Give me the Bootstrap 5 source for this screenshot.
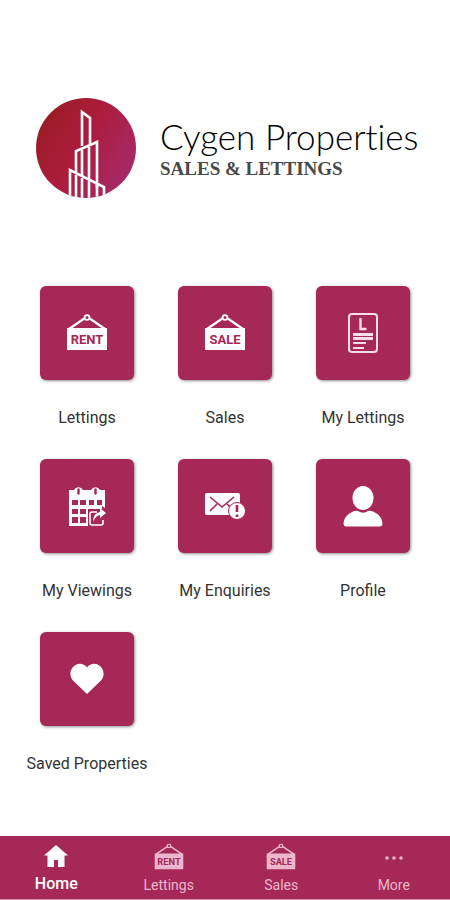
<!DOCTYPE html>
<html lang="en">
<head>
<meta charset="utf-8">
<meta name="viewport" content="width=device-width, initial-scale=1">
<title>Cygen Properties</title>
<link href="https://cdn.jsdelivr.net/npm/bootstrap@5.3.0/dist/css/bootstrap.min.css" rel="stylesheet">
<style>
  :root { --brand: #a62856; --brand-soft: #ecb6cc; }
  body { font-family: Roboto, "Liberation Sans", sans-serif; color: #333; background: #fff; }
  .brand-header { padding: 98px 32px 88px 36px; gap: 24px; }
  .brand-logo { width: 100px; height: 100px; }
  .brand-name { font: 300 35px/42px Lato, "Liberation Sans", sans-serif; font-variant-ligatures: none; color: #000; }
  .brand-tagline { font: 700 19px/24px "Liberation Serif", serif; color: #484848; }
  .menu-grid { padding: 0 18px; row-gap: 29px; }
  .menu-link { color: #333; gap: 26px; line-height: 24px; font-size: 16px; }
  .menu-tile { width: 94px; height: 94px; border-radius: 6px; background: var(--brand); color: #fff; box-shadow: 1px 1px 3px rgba(0, 0, 0, .45); }
  svg text { font-family: Roboto, "Liberation Sans", sans-serif; font-weight: 700; text-anchor: middle; }
  .tab-bar { background: var(--brand); border-bottom: 1px solid #d78ba8; }
  .tab-link { color: var(--brand-soft); height: 63px; padding-top: 6px; gap: 3px; font-size: 14px; line-height: 20px; }
  .tab-link svg { height: 30px; }
  .tab-link.active { color: #fff; font-size: 16px; font-weight: 500; gap: 2px; }
</style>
</head>
<body>
<svg class="d-none" aria-hidden="true">
  <symbol id="sign" viewBox="0 0 42 38">
    <path d="M3 15 19 4M39 15 23 4" fill="none" stroke="currentColor" stroke-width="2.200"/>
    <circle cx="21" cy="3.500" r="2.400" fill="none" stroke="currentColor" stroke-width="1.800"/>
    <path d="M1 14h40v22H1z" fill="currentColor"/>
  </symbol>
</svg>
<div class="d-flex flex-column min-vh-100">
  <header class="brand-header d-flex align-items-center">
    <svg class="brand-logo flex-shrink-0" viewBox="0 0 100 100" aria-hidden="true">
      <defs>
        <linearGradient id="logo-fill" x1="0" y1=".2" x2="1" y2=".8">
          <stop offset="0" stop-color="#981c24"/><stop offset=".45" stop-color="#ac1c3c"/><stop offset="1" stop-color="#a52c6c"/>
        </linearGradient>
        <clipPath id="logo-clip"><circle cx="50" cy="50" r="50"/></clipPath>
      </defs>
      <circle cx="50" cy="50" r="50" fill="url(#logo-fill)"/>
      <g clip-path="url(#logo-clip)" fill="none" stroke="#fff" stroke-width="2.600">
        <path d="M46 48V14l8 6v26M40 75V53l21-9v46M34 100V72l34 17v11"/>
        <path d="M46 52v26M53 49v32M40 77v24M46 80v21M53 83v18M61 86v15"/>
      </g>
    </svg>
    <div>
      <h1 class="brand-name mb-0 text-nowrap">Cygen Properties</h1>
      <p class="brand-tagline mb-0 text-nowrap">SALES &amp; LETTINGS</p>
    </div>
  </header>

  <main class="pb-5">
    <div class="menu-grid row row-cols-3 g-0">
      <div class="col">
        <a href="#lettings" class="menu-link d-flex flex-column align-items-center text-decoration-none text-nowrap">
          <span class="menu-tile d-flex align-items-center justify-content-center">
            <svg width="42" height="38" viewBox="0 0 42 38"><use href="#sign"/><text x="21" y="30" font-size="13" fill="#a62856">RENT</text></svg>
          </span>
          <span>Lettings</span>
        </a>
      </div>
      <div class="col">
        <a href="#sales" class="menu-link d-flex flex-column align-items-center text-decoration-none text-nowrap">
          <span class="menu-tile d-flex align-items-center justify-content-center">
            <svg width="42" height="38" viewBox="0 0 42 38"><use href="#sign"/><text x="21" y="30" font-size="13" fill="#a62856">SALE</text></svg>
          </span>
          <span>Sales</span>
        </a>
      </div>
      <div class="col">
        <a href="#my-lettings" class="menu-link d-flex flex-column align-items-center text-decoration-none text-nowrap">
          <span class="menu-tile d-flex align-items-center justify-content-center">
            <svg width="32" height="42" viewBox="0 0 32 42">
              <rect x="2" y="2" width="28" height="38" rx="3" fill="none" stroke="#fbdde9" stroke-width="2"/>
              <path d="M13.500 6v11h6" fill="none" stroke="#fbdde9" stroke-width="2.400"/>
              <path d="M6 22.500h20M6 26.500h20" stroke="#fbdde9" stroke-width="3"/>
              <path d="M6 31h13M6 36h11" stroke="#fbdde9" stroke-width="1.800"/>
            </svg>
          </span>
          <span>My Lettings</span>
        </a>
      </div>
      <div class="col">
        <a href="#my-viewings" class="menu-link d-flex flex-column align-items-center text-decoration-none text-nowrap">
          <span class="menu-tile d-flex align-items-center justify-content-center">
            <svg width="40" height="42" viewBox="0 0 40 42">
              <path d="M2 5h5a5 5 0 0 1 9 0h8a5 5 0 0 1 9 0h5v18l-3-2v5H21v15H2z" fill="#fff"/>
              <path d="M11.500 4.500v4M28.500 4.500v4" stroke="#a62856" stroke-width="2.400" stroke-linecap="round"/>
              <path d="M5 15h6v5H5zM13 15h6v5h-6zM22 15h5v5h-5zM30 15h5v5h-5zM5 24h6v5H5zM13 24h6v5h-6zM5 32h6v6H5zM13 32h6v6h-6z" fill="#a62856"/>
              <path d="M21 24h19v16H21z" fill="#a62856"/>
              <path d="M30 27h-5q-2 0-2 2v9q0 2 2 2h9q2 0 2-2v-3" fill="none" stroke="#fff" stroke-width="1.600"/>
              <path d="M26 37q0-9 7-10v-4l6 5-6 5v-3q-4 0-7 7z" fill="#fff"/>
            </svg>
          </span>
          <span>My Viewings</span>
        </a>
      </div>
      <div class="col">
        <a href="#my-enquiries" class="menu-link d-flex flex-column align-items-center text-decoration-none text-nowrap">
          <span class="menu-tile d-flex align-items-center justify-content-center">
            <svg width="42" height="30" viewBox="0 0 42 30">
              <rect x="1" y="2" width="35" height="22" rx="2" fill="#fff"/>
              <path d="m6 6 12 10L30 6M6 20l7-7M30 20l-7-7" fill="none" stroke="#a62856" stroke-width="1.600"/>
              <circle cx="33" cy="20" r="8.500" fill="#fff" stroke="#a62856" stroke-width="1"/>
              <path d="M33 14v7M33 23.500v2.500" stroke="#a62856" stroke-width="2.600"/>
            </svg>
          </span>
          <span>My Enquiries</span>
        </a>
      </div>
      <div class="col">
        <a href="#profile" class="menu-link d-flex flex-column align-items-center text-decoration-none text-nowrap">
          <span class="menu-tile d-flex align-items-center justify-content-center">
            <svg width="42" height="42" viewBox="0 0 42 42" fill="#fff">
              <ellipse cx="21" cy="13" rx="10.500" ry="12"/>
              <path d="M11 26.500q2.500-1 5-.5 5 3.500 10 0 2.500-.5 5 .5 9 4 9.500 12 0 3-3 3h-33q-3 0-3-3Q2 30.500 11 26.500z"/>
            </svg>
          </span>
          <span>Profile</span>
        </a>
      </div>
      <div class="col">
        <a href="#saved" class="menu-link d-flex flex-column align-items-center text-decoration-none text-nowrap">
          <span class="menu-tile d-flex align-items-center justify-content-center">
            <svg width="34" height="32" viewBox="0 0 34 32" fill="#fff">
              <path d="M17 31 3 17.500C-2 12 .5 3 8 1q5.500-1 9 3.500Q20.500 0 26 1c7.500 2 10 11 5 16.500z"/>
            </svg>
          </span>
          <span>Saved Properties</span>
        </a>
      </div>
    </div>
  </main>

  <nav class="tab-bar mt-auto" aria-label="Main">
    <div class="row row-cols-4 g-0">
      <div class="col">
        <a href="#home" class="tab-link active d-flex flex-column align-items-center text-decoration-none" aria-current="page">
          <svg width="24" height="30" viewBox="0 0 24 30" fill="currentColor"><path d="m12 3 12 10.500h-3.500V25H14v-7h-4v7H3.500V13.500H0z"/></svg>
          <span>Home</span>
        </a>
      </div>
      <div class="col">
        <a href="#lettings" class="tab-link d-flex flex-column align-items-center text-decoration-none">
          <svg width="30" height="30" viewBox="0 0 42 38"><use href="#sign"/><text x="21" y="30" font-size="13" fill="#a62856">RENT</text></svg>
          <span>Lettings</span>
        </a>
      </div>
      <div class="col">
        <a href="#sales" class="tab-link d-flex flex-column align-items-center text-decoration-none">
          <svg width="30" height="30" viewBox="0 0 42 38"><use href="#sign"/><text x="21" y="30" font-size="13" fill="#a62856">SALE</text></svg>
          <span>Sales</span>
        </a>
      </div>
      <div class="col">
        <a href="#more" class="tab-link d-flex flex-column align-items-center text-decoration-none">
          <svg width="20" height="30" viewBox="0 0 20 30" fill="currentColor"><circle cx="3" cy="16" r="1.800"/><circle cx="10" cy="16" r="1.800"/><circle cx="17" cy="16" r="1.800"/></svg>
          <span>More</span>
        </a>
      </div>
    </div>
  </nav>
</div>
<script src="https://cdn.jsdelivr.net/npm/bootstrap@5.3.0/dist/js/bootstrap.bundle.min.js"></script>
</body>
</html>
